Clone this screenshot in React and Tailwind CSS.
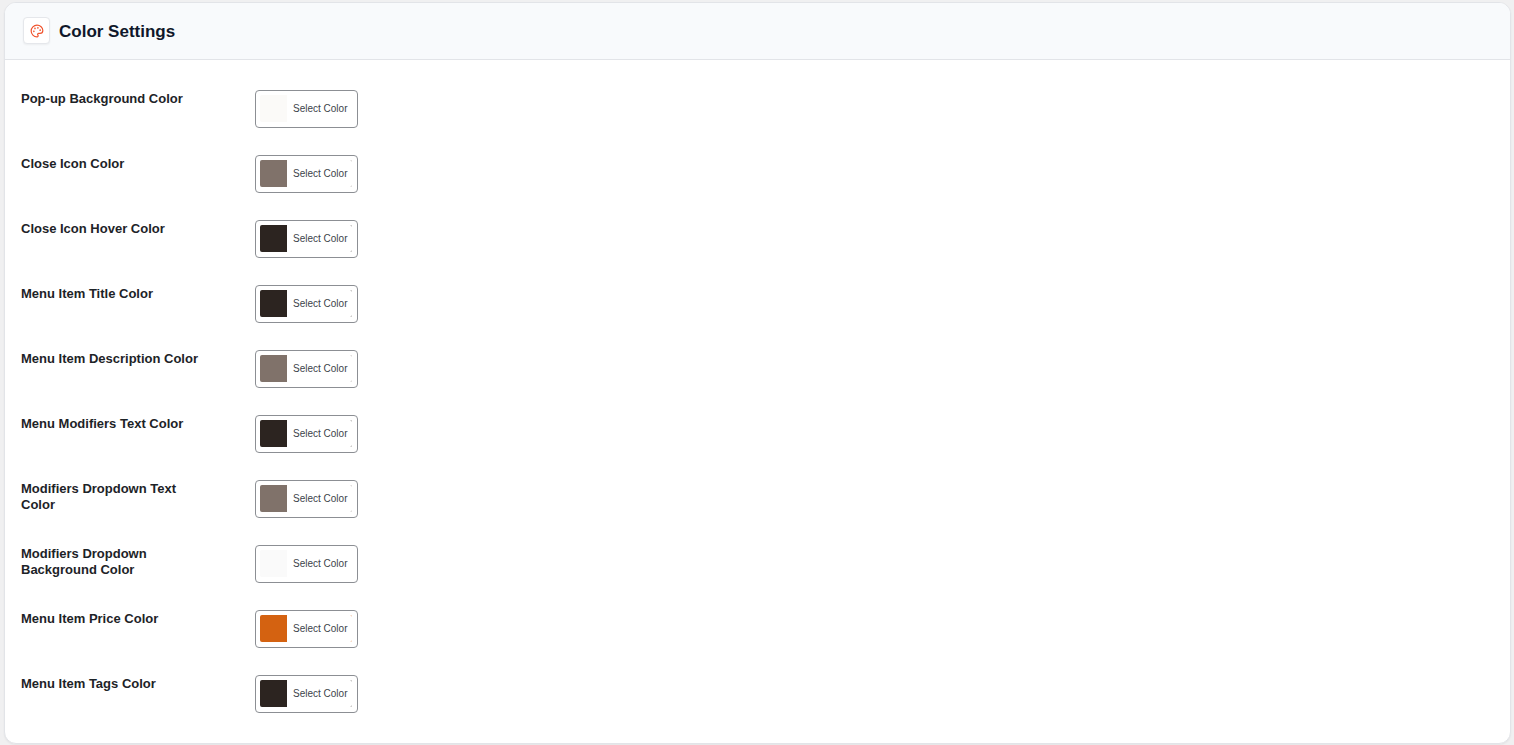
import { useState } from 'react'
import { Palette } from 'lucide-react'

const COLOR_FIELDS = [
  { id: 'popup_bg', label: 'Pop-up Background Color', value: '#fbfaf8' },
  { id: 'close_icon', label: 'Close Icon Color', value: '#80726a' },
  { id: 'close_icon_hover', label: 'Close Icon Hover Color', value: '#2c2420' },
  { id: 'item_title', label: 'Menu Item Title Color', value: '#2c2420' },
  { id: 'item_description', label: 'Menu Item Description Color', value: '#80726a' },
  { id: 'modifiers_text', label: 'Menu Modifiers Text Color', value: '#2c2420' },
  { id: 'dropdown_text', label: 'Modifiers Dropdown Text Color', value: '#80726a' },
  { id: 'dropdown_bg', label: 'Modifiers Dropdown Background Color', value: '#fafafa' },
  { id: 'item_price', label: 'Menu Item Price Color', value: '#d46211' },
  { id: 'item_tags', label: 'Menu Item Tags Color', value: '#2c2420' },
]

function ColorButton({ id, color, onClick }) {
  return (
    <div className="rounded-[4px] border border-[#8c8f94] bg-white pt-1 pr-[5px] pb-[5px] pl-1">
      <button
        id={id}
        type="button"
        onClick={onClick}
        className="flex h-[27px] cursor-pointer rounded-[2px] pl-[27px]"
        style={{ backgroundColor: color }}
      >
        <span className="rounded-r-[2px] bg-white pr-[5px] pl-1.5 text-[10px] leading-[27px] text-[#3c434a]">
          Select Color
        </span>
      </button>
    </div>
  )
}

function ColorRow({ field, onSelect }) {
  return (
    <div className="flex min-h-[38px] items-start gap-[54px]">
      <label
        htmlFor={field.id}
        className="w-[180px] shrink-0 pt-px text-[13px] leading-4 font-semibold text-[#1d2327]"
      >
        {field.label}
      </label>
      <ColorButton id={field.id} color={field.value} onClick={() => onSelect(field.id)} />
    </div>
  )
}

export default function App() {
  const [, setActive] = useState(null)

  return (
    <div className="min-h-screen bg-[#f0f0f1] pt-0.5 pr-[3px] pb-px pl-1 font-['Liberation_Sans',Arial,sans-serif]">
      <section className="overflow-hidden rounded-xl border border-[#e2e4e8] bg-white shadow-xs">
        {/* Header */}
        <div className="flex items-start gap-[9px] border-b border-[#e2e4e8] bg-[#f8fafc] px-[18px] pt-3.5 pb-3">
          <span className="flex size-[27px] items-center justify-center rounded-[4px] border border-[#e5e7eb] bg-white text-[#f0532d] shadow-xs">
            <Palette size={14} strokeWidth={2} />
          </span>
          <h2 className="text-[17px] leading-[30px] font-semibold text-[#0f172a]">Color Settings</h2>
        </div>

        {/* Color fields */}
        <div className="flex flex-col gap-[27px] px-4 py-[30px]">
          {COLOR_FIELDS.map((field) => (
            <ColorRow key={field.id} field={field} onSelect={setActive} />
          ))}
        </div>
      </section>
    </div>
  )
}
